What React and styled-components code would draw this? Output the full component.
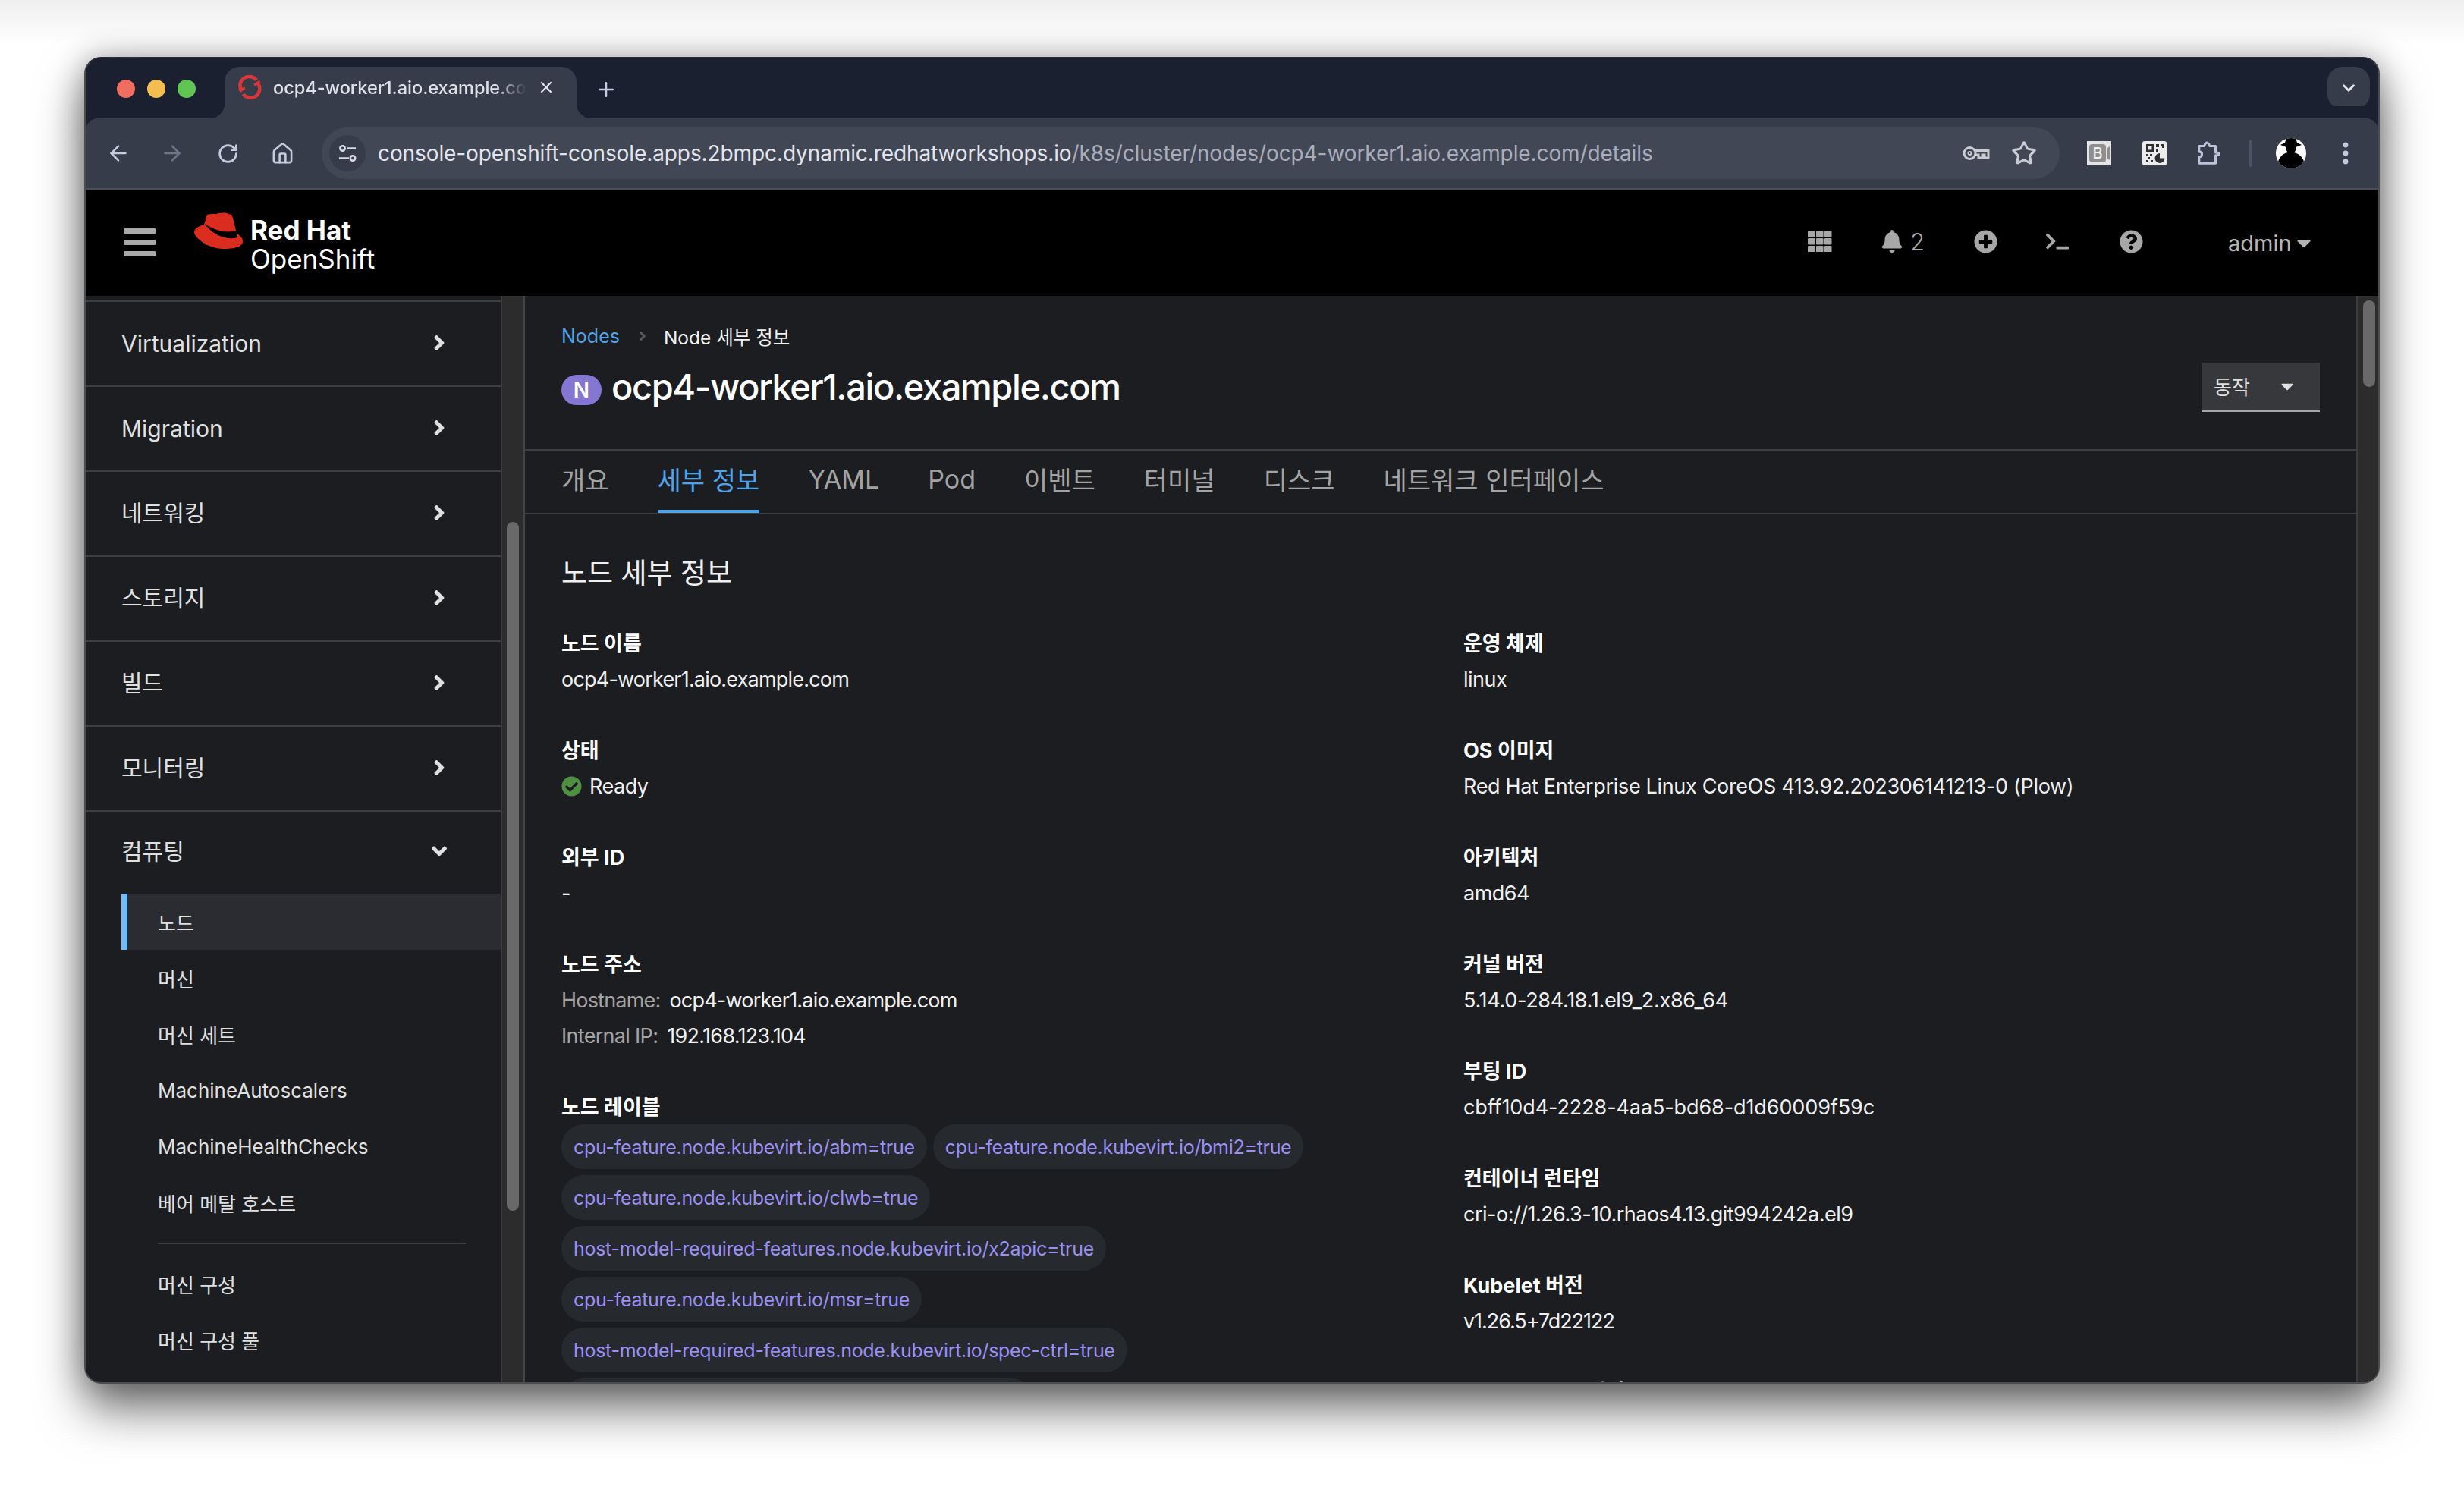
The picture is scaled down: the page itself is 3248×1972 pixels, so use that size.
import styled, { createGlobalStyle } from 'styled-components';
import { ArrowLeft, ArrowRight, House, RotateCw, Star, Plus, X, ChevronDown } from 'lucide-react';
import { FaAngleRight, FaAngleDown, FaBell, FaPlusCircle, FaQuestionCircle, FaTerminal, FaCaretDown, FaCheckCircle } from 'react-icons/fa';

const SANS = `Inter, "Noto Sans CJK KR", sans-serif`;

const GlobalStyle = createGlobalStyle`
  html, body { margin: 0; padding: 0; background: #fff; }
  body { font-family: ${SANS}; }
  * { box-sizing: border-box; }
`;

// Fenêtre du navigateur
const Page = styled.div`
  width: 3248px;
  height: 1972px;
  padding: 75px 111px 0;
  background: linear-gradient(#efefef 0, #fff 60px);
  overflow: hidden;
`;

const Window = styled.div`
  width: 3026px;
  height: 1749px;
  display: flex;
  flex-direction: column;
  border: 2px solid #4a4c50;
  border-top-color: #2b2e36;
  border-radius: 22px;
  overflow: hidden;
  background: #1b1d21;
  box-shadow: 0 34px 62px rgba(0, 0, 0, 0.55), 0 0 40px rgba(0, 0, 0, 0.3);
`;

const TabStrip = styled.div`
  height: 79px;
  flex: none;
  display: flex;
  align-items: flex-start;
  padding: 11px 11px 0 41px;
  background: #1a2030;
`;

const Lights = styled.div`
  display: flex;
  gap: 16px;
  margin-top: 17px;
`;

const Light = styled.span`
  width: 24px;
  height: 24px;
  border-radius: 50%;
  background: ${(p) => p.$color};
`;

const BrowserTab = styled.div`
  position: relative;
  width: 464px;
  height: 68px;
  margin-left: 38px;
  padding: 0 20px 14px 17px;
  display: flex;
  align-items: center;
  background: #373c4b;
  border-radius: 20px 20px 0 0;

  &::before, &::after {
    content: '';
    position: absolute;
    bottom: 0;
    width: 20px;
    height: 20px;
  }
  &::before {
    left: -20px;
    background: radial-gradient(circle at 0 0, #1a2030 20px, #373c4b 20.5px);
  }
  &::after {
    right: -20px;
    background: radial-gradient(circle at 100% 0, #1a2030 20px, #373c4b 20.5px);
  }
`;

const TabTitle = styled.span`
  width: 334px;
  margin-left: 15px;
  font-size: 23.5px;
  font-weight: 500;
  color: #dfe1e8;
  white-space: nowrap;
  overflow: hidden;
  mask-image: linear-gradient(to right, #000 88%, transparent 100%);
`;

const TabClose = styled.span`
  display: flex;
  margin-left: 14px;
  color: #e4e6ee;
`;

const NewTab = styled.span`
  display: flex;
  margin: 15px 0 0 24px;
  color: #c5cade;
`;

const TabMenu = styled.span`
  width: 56px;
  height: 56px;
  margin-left: auto;
  display: flex;
  align-items: center;
  justify-content: center;
  background: #373c4b;
  border-radius: 20px;
  color: #e4e6ee;
`;

const Toolbar = styled.div`
  height: 94px;
  flex: none;
  display: flex;
  align-items: center;
  padding: 0 0 0 27px;
  background: #373c4b;
  border-bottom: 2px solid #4c4f57;
  border-radius: 16px 16px 0 0;
  box-shadow: 0 -16px 0 #1a2030;
`;

const ToolButton = styled.span`
  width: 32px;
  height: 40px;
  flex: none;
  display: flex;
  align-items: center;
  justify-content: center;
  margin-left: ${(p) => p.$gap || 0}px;
  color: ${(p) => (p.$dim ? '#6f7588' : '#c5cade')};
`;

const Omnibox = styled.div`
  width: 2291px;
  height: 68px;
  flex: none;
  margin-left: 36px;
  padding: 0 30px 0 10px;
  display: flex;
  align-items: center;
  background: #424756;
  border-radius: 34px;
`;

const TuneBadge = styled.span`
  width: 48px;
  height: 48px;
  flex: none;
  display: flex;
  align-items: center;
  justify-content: center;
  border-radius: 50%;
  background: #373c4b;
`;

const Url = styled.div`
  margin-left: 16px;
  font-size: 28px;
  letter-spacing: -0.1px;
  color: #e3e5ec;
  white-space: nowrap;

  span { color: #a9adba; }
`;

const OmniIcons = styled.div`
  margin-left: auto;
  display: flex;
  align-items: center;
  gap: 28px;
  color: #c9cbd3;
`;

const Separator = styled.span`
  width: 3px;
  height: 36px;
  margin-left: 37px;
  background: #4d5366;
  border-radius: 2px;
`;

const Avatar = styled.span`
  width: 40px;
  height: 40px;
  flex: none;
  margin-left: 32px;
  display: flex;
`;

// Barre noire de la console
const Masthead = styled.header`
  height: 140px;
  flex: none;
  display: flex;
  align-items: center;
  background: #000;
`;

const Burger = styled.div`
  width: 42px;
  margin: 0 0 2px 50px;
  display: flex;
  flex-direction: column;
  gap: 8px;

  span {
    height: 7px;
    border-radius: 1px;
    background: #a9a9a9;
  }
`;

const Logo = styled.div`
  margin-left: 51px;
  display: flex;
  align-items: flex-start;
`;

const LogoText = styled.div`
  margin: 4px 0 0 10px;
  color: #fff;

  b {
    display: block;
    font-size: 35px;
    line-height: 38px;
    font-weight: 700;
  }
  span {
    display: block;
    font-size: 35px;
    line-height: 38px;
    font-weight: 400;
  }
`;

const HeadTools = styled.div`
  margin-left: auto;
  padding-bottom: 4px;
  display: grid;
  grid-template-columns: 96px 130px 80px 110px 84px 284px;
  align-items: center;
  justify-items: center;
  color: #a7a7a7;
`;

const BellGroup = styled.span`
  margin-right: 8px;
  display: flex;
  align-items: center;
  gap: 9px;
  font-size: 31px;
  font-weight: 300;
`;

const AdminMenu = styled.span`
  justify-self: start;
  margin: 4px 0 0 86px;
  display: flex;
  align-items: center;
  gap: 1px;
  font-size: 29px;
  font-weight: 400;
  color: #b4b4b4;
`;

const Body = styled.div`
  flex: 1;
  min-height: 0;
  display: flex;
  overflow: hidden;
`;

// Menu latéral
const Sidebar = styled.nav`
  width: 547px;
  flex: none;
  padding-top: 6px;
  overflow: hidden;
`;

const NavGroup = styled.div`
  height: ${(p) => (p.$open ? 110 : 112)}px;
  padding: 0 65px ${(p) => (p.$open ? 2 : 0)}px 47px;
  display: flex;
  align-items: center;
  justify-content: space-between;
  border-top: 2px solid #3c3f42;
  font-size: 30px;
  color: #e0e0e0;

  svg { margin-bottom: 3px; }
`;

const NavLabel = styled.span`
  margin-bottom: ${(p) => (p.$korean ? 6 : 0)}px;
`;

const SubItem = styled.div`
  height: 74px;
  margin-left: 47px;
  padding-left: ${(p) => (p.$active ? 40 : 48)}px;
  display: flex;
  align-items: center;
  font-size: 26px;
  color: #e0e0e0;
  background: ${(p) => (p.$active ? '#2a2c31' : 'transparent')};
  border-left: ${(p) => (p.$active ? '8px solid #73bcf7' : 'none')};
`;

const SubDivider = styled.hr`
  height: 2px;
  margin: 16px 46px 15px 95px;
  border: 0;
  background: #3c3f42;
`;

const ScrollTrack = styled.div`
  width: ${(p) => p.$width}px;
  flex: none;
  padding-left: ${(p) => p.$inset}px;
  background: #2c2c2c;
  border-right: ${(p) => (p.$ruleRight ? '3px solid #454545' : 'none')};
  border-left: ${(p) => (p.$ruleLeft ? '2px solid #3c3c3c' : 'none')};
`;

const ScrollThumb = styled.div`
  width: 16px;
  height: ${(p) => p.$height}px;
  margin-top: ${(p) => p.$top}px;
  border-radius: 8px;
  background: #696969;
`;

const Main = styled.main`
  flex: 1;
  min-width: 0;
  overflow: hidden;
  background: #1b1d21;
`;

const PageHead = styled.div`
  height: 204px;
  padding: 36px 48px 0;
  border-bottom: 2px solid #3c3f42;
`;

const Crumbs = styled.div`
  height: 34px;
  display: flex;
  align-items: center;
  font-size: 24.5px;
  color: #f0f0f0;

  a { color: #4fa3ea; font-size: 25px; }
  svg { margin: 0 18px 0 20px; color: #55575b; }
`;

const TitleRow = styled.div`
  margin-top: 21px;
  display: flex;
  align-items: flex-start;
  justify-content: space-between;
`;

const Title = styled.h1`
  margin: 0;
  display: flex;
  align-items: center;
  height: 56px;
  font-size: 47px;
  font-weight: 500;
  letter-spacing: -1.4px;
  color: #fff;
`;

const NodeBadge = styled.span`
  width: 53px;
  height: 40px;
  margin: 10px 13px 0 0;
  display: flex;
  align-items: center;
  justify-content: center;
  border-radius: 20px;
  background: #8476d1;
  font-size: 28px;
  font-weight: 600;
  letter-spacing: 0;
`;

const ActionButton = styled.button`
  width: 156px;
  height: 65px;
  margin-top: -3px;
  padding: 0 30px 2px 16px;
  display: flex;
  align-items: center;
  justify-content: space-between;
  background: #36383c;
  border: 0;
  border-bottom: 2px solid #a5a5a5;
  font-family: inherit;
  font-size: 26px;
  color: #e0e0e0;
`;

const Tabs = styled.div`
  height: 84px;
  padding: 0 48px;
  display: flex;
  gap: 64px;
  border-bottom: 2px solid #3c3f42;
`;

const TabLink = styled.span`
  height: 82px;
  padding-bottom: 3px;
  display: flex;
  align-items: center;
  font-size: 34px;
  color: ${(p) => (p.$active ? '#4fa3ea' : '#a3a3a3')};
  border-bottom: 4px solid ${(p) => (p.$active ? '#4fa3ea' : 'transparent')};
`;

const Section = styled.section`
  padding: 53px 0 0 48px;
`;

const SectionTitle = styled.h2`
  margin: 0 0 44px;
  font-size: 37px;
  line-height: 50px;
  font-weight: 400;
  color: #f0f0f0;
`;

const Columns = styled.div`
  display: grid;
  grid-template-columns: 1189px 1fr;
`;

const Field = styled.div`
  padding-right: 48px;
  margin-bottom: 47px;
`;

const Label = styled.div`
  font-size: 27px;
  line-height: 47px;
  font-weight: 700;
  color: #fff;
`;

const Value = styled.div`
  display: flex;
  align-items: center;
  gap: 10px;
  font-size: 27px;
  line-height: 47px;
  letter-spacing: ${(p) => p.$track ?? -0.5}px;
  color: #f0f0f0;
  white-space: nowrap;

  em {
    margin-right: 2px;
    font-style: normal;
    color: #a3a3a3;
  }
`;

const ChipWrap = styled.div`
  margin-top: -1px;
  display: flex;
  flex-wrap: wrap;
  gap: 8px;
`;

const Chip = styled.span`
  height: 59px;
  padding: 0 16px;
  display: flex;
  align-items: center;
  border-radius: 30px;
  background: #26292d;
  font-size: 25px;
  letter-spacing: -0.3px;
  color: #9a8ff5;
  white-space: nowrap;
`;

const navGroups = ['Virtualization', 'Migration', '네트워킹', '스토리지', '빌드', '모니터링'];
const computeItems = ['노드', '머신', '머신 세트', 'MachineAutoscalers', 'MachineHealthChecks', '베어 메탈 호스트'];
const configItems = ['머신 구성', '머신 구성 풀'];
const pageTabs = ['개요', '세부 정보', 'YAML', 'Pod', '이벤트', '터미널', '디스크', '네트워크 인터페이스'];

const rightFields = [
  ['운영 체제', 'linux'],
  ['OS 이미지', 'Red Hat Enterprise Linux CoreOS 413.92.202306141213-0 (Plow)', -0.33],
  ['아키텍처', 'amd64'],
  ['커널 버전', '5.14.0-284.18.1.el9_2.x86_64', -0.3],
  ['부팅 ID', 'cbff10d4-2228-4aa5-bd68-d1d60009f59c', -0.1],
  ['컨테이너 런타임', 'cri-o://1.26.3-10.rhaos4.13.git994242a.el9'],
  ['Kubelet 버전', 'v1.26.5+7d22122', -1.05],
  ['Kube-Proxy 버전', 'v1.26.5+7d22122', -1.05],
];

const labels = [
  'cpu-feature.node.kubevirt.io/abm=true',
  'cpu-feature.node.kubevirt.io/bmi2=true',
  'cpu-feature.node.kubevirt.io/clwb=true',
  'host-model-required-features.node.kubevirt.io/x2apic=true',
  'cpu-feature.node.kubevirt.io/msr=true',
  'host-model-required-features.node.kubevirt.io/spec-ctrl=true',
  'cpu-model-migration.node.kubevirt.io/Penryn=true',
];

const OpenShiftFavicon = () => (
  <svg width="32" height="32" viewBox="0 0 32 32" fill="none" stroke="#d8373a" strokeWidth="4.5">
    <path d="M6 21.5A12 12 0 0 1 25 6.5" />
    <path d="M27 11A12 12 0 0 1 7.5 25" />
    <path d="M2 19.5l8-2M22 13l7.5-4.5" strokeWidth="3.5" />
  </svg>
);

const TuneIcon = () => (
  <svg width="26" height="26" viewBox="0 0 26 26" fill="none" stroke="#d9dbe4" strokeWidth="2.6">
    <circle cx="6.5" cy="6.5" r="3.2" />
    <path d="M13 6.5h11M2 19.5h13" />
    <circle cx="20" cy="19.5" r="3.2" />
  </svg>
);

const KeyIcon = () => (
  <svg width="36" height="22" viewBox="0 0 36 22" fill="none" stroke="currentColor" strokeWidth="3">
    <circle cx="9.5" cy="11" r="7.5" />
    <circle cx="9.5" cy="11" r="2" strokeWidth="2" />
    <path d="M17 7.5h17v9.5h-5v-4h-3v4h-5v-4h-4" />
  </svg>
);

const BookmarkExt = () => (
  <svg width="32" height="32" viewBox="0 0 32 32">
    <rect width="32" height="32" fill="#e4e4e4" />
    <rect x="3" y="4" width="22" height="24" rx="4" fill="#8e8e8e" />
    <path d="M27 9l3-2v18l-3-2z" fill="#8e8e8e" />
    <text x="14" y="23" textAnchor="middle" fontFamily="Inter" fontSize="20" fontWeight="500" fill="#f2f2f2">B</text>
  </svg>
);

const QrExt = () => (
  <svg width="32" height="32" viewBox="0 0 32 32">
    <rect width="32" height="32" rx="3" fill="#ececec" />
    <g fill="#2d2f33">
      <path d="M5 4h10v10H5zM7.500 6.500v5h5v-5z" fillRule="evenodd" />
      <path d="M18 4h4v4h-4zM24 4h4v5h-2v-3h-2zM18 10h3v4h-3z" />
      <path d="M5 17h3v3H5zM10 17h3v3h-3zM7 21h3v3H7zM5 25h3v3H5zM11 25h3v3h-3z" />
      <path d="M23 16a6.500 6.500 0 1 0 6.500 6.500H23z" />
    </g>
  </svg>
);

const PuzzleExt = () => (
  <svg width="34" height="36" viewBox="0 0 34 36" fill="none" stroke="#bcc2da" strokeWidth="3.2" strokeLinejoin="round">
    <path d="M3 8h7c1-2 2-5 4-5s3 3 4 5h8v9c2 0 5 0 5 2s-3 2-5 2v11H3v-9c3 0 4-1 4-3.500S6 16 3 16z" />
  </svg>
);

const SpyAvatar = () => (
  <svg width="40" height="40" viewBox="0 0 40 40">
    <clipPath id="avatar-clip"><circle cx="20" cy="20" r="20" /></clipPath>
    <g clipPath="url(#avatar-clip)">
      <rect width="40" height="40" fill="#fff" />
      <path d="M14 0h12l2 6 6 3-8 3c1 3 0 5-2 7 5 1 9 4 12 9l4 12H0l4-12c3-5 6-8 12-9-2-2-3-4-2-7L6 9l6-3z" fill="#000" />
    </g>
  </svg>
);

const MoreDots = () => (
  <svg width="8" height="30" viewBox="0 0 8 30" fill="#c5cade">
    <circle cx="4" cy="4" r="3.4" />
    <circle cx="4" cy="15" r="3.4" />
    <circle cx="4" cy="26" r="3.4" />
  </svg>
);

const RedHatMark = () => (
  <svg width="64" height="48" viewBox="0 0 64 48">
    <path
      d="M17 3C22 1 28 3 33 1C40-.5 47 1 50 5C52 10 54 20 56 28C60 30 64 33 64 38C64 46 52 48 38 48C18 48 0 33 0 26C0 21 6 18 13 16Z"
      fill="#db2c20"
    />
    <path d="M14 15C25 23 42 28 55 24L57 33C45 37 25 31 14 15Z" fill="#000" />
  </svg>
);

const AppGrid = () => (
  <svg width="32" height="28" viewBox="0 0 32 28" fill="currentColor">
    {[0, 11, 22].map((x) =>
      [0, 10, 20].map((y) => <rect key={`${x}-${y}`} x={x} y={y} width="9.500" height="8.500" rx="1" />)
    )}
  </svg>
);

const App = () => (
  <Page>
    <GlobalStyle />
    <Window>
      <TabStrip>
        <Lights>
          <Light $color="#f16d60" />
          <Light $color="#f5bd4f" />
          <Light $color="#61c554" />
        </Lights>
        <BrowserTab>
          <OpenShiftFavicon />
          <TabTitle>ocp4-worker1.aio.example.com</TabTitle>
          <TabClose><X size={24} strokeWidth={2.2} /></TabClose>
        </BrowserTab>
        <NewTab><Plus size={30} strokeWidth={2} /></NewTab>
        <TabMenu><ChevronDown size={26} strokeWidth={2.6} /></TabMenu>
      </TabStrip>

      <Toolbar>
        <ToolButton><ArrowLeft size={32} strokeWidth={2} /></ToolButton>
        <ToolButton $gap={39} $dim><ArrowRight size={32} strokeWidth={2} /></ToolButton>
        <ToolButton $gap={41}><RotateCw size={29} strokeWidth={2.2} /></ToolButton>
        <ToolButton $gap={40}><House size={31} strokeWidth={2} /></ToolButton>
        <Omnibox>
          <TuneBadge><TuneIcon /></TuneBadge>
          <Url>
            console-openshift-console.apps.2bmpc.dynamic.redhatworkshops.io
            <span>/k8s/cluster/nodes/ocp4-worker1.aio.example.com/details</span>
          </Url>
          <OmniIcons>
            <KeyIcon />
            <Star size={34} strokeWidth={2.2} />
          </OmniIcons>
        </Omnibox>
        <ToolButton $gap={36}><BookmarkExt /></ToolButton>
        <ToolButton $gap={41}><QrExt /></ToolButton>
        <ToolButton $gap={40}><PuzzleExt /></ToolButton>
        <Separator />
        <Avatar><SpyAvatar /></Avatar>
        <ToolButton $gap={36}><MoreDots /></ToolButton>
      </Toolbar>

      <Masthead>
        <Burger><span /><span /><span /></Burger>
        <Logo>
          <RedHatMark />
          <LogoText>
            <b>Red Hat</b>
            <span>OpenShift</span>
          </LogoText>
        </Logo>
        <HeadTools>
          <AppGrid />
          <BellGroup><FaBell size={30} />2</BellGroup>
          <FaPlusCircle size={31} />
          <FaTerminal size={30} />
          <FaQuestionCircle size={31} />
          <AdminMenu>admin<FaCaretDown size={30} /></AdminMenu>
        </HeadTools>
      </Masthead>

      <Body>
        <Sidebar>
          {navGroups.map((name, index) => (
            <NavGroup key={name}>
              <NavLabel $korean={index > 1}>{name}</NavLabel>
              <FaAngleRight size={32} />
            </NavGroup>
          ))}
          <NavGroup $open>
            <NavLabel $korean>컴퓨팅</NavLabel>
            <FaAngleDown size={32} />
          </NavGroup>
          {computeItems.map((name, index) => (
            <SubItem key={name} $active={index === 0}>{name}</SubItem>
          ))}
          <SubDivider />
          {configItems.map((name) => (
            <SubItem key={name}>{name}</SubItem>
          ))}
        </Sidebar>
        <ScrollTrack $width={32} $inset={6} $ruleLeft $ruleRight>
          <ScrollThumb $top={298} $height={908} />
        </ScrollTrack>

        <Main>
          <PageHead>
            <Crumbs>
              <a>Nodes</a>
              <FaAngleRight size={20} />
              Node 세부 정보
            </Crumbs>
            <TitleRow>
              <Title><NodeBadge>N</NodeBadge>ocp4-worker1.aio.example.com</Title>
              <ActionButton>동작<FaCaretDown size={26} /></ActionButton>
            </TitleRow>
          </PageHead>

          <Tabs>
            {pageTabs.map((name) => (
              <TabLink key={name} $active={name === '세부 정보'}>{name}</TabLink>
            ))}
          </Tabs>

          <Section>
            <SectionTitle>노드 세부 정보</SectionTitle>
            <Columns>
              <div>
                <Field>
                  <Label>노드 이름</Label>
                  <Value $track={-0.8}>ocp4-worker1.aio.example.com</Value>
                </Field>
                <Field>
                  <Label>상태</Label>
                  <Value><FaCheckCircle size={27} color="#4f8f42" />Ready</Value>
                </Field>
                <Field>
                  <Label>외부 ID</Label>
                  <Value>-</Value>
                </Field>
                <Field>
                  <Label>노드 주소</Label>
                  <Value $track={-0.8}><em>Hostname:</em>ocp4-worker1.aio.example.com</Value>
                  <Value $track={-0.7}><em>Internal IP:</em>192.168.123.104</Value>
                </Field>
                <Field>
                  <Label>노드 레이블</Label>
                  <ChipWrap>
                    {labels.map((label) => <Chip key={label}>{label}</Chip>)}
                  </ChipWrap>
                </Field>
              </div>
              <div>
                {rightFields.map(([label, value, track]) => (
                  <Field key={label}>
                    <Label>{label}</Label>
                    <Value $track={track}>{value}</Value>
                  </Field>
                ))}
              </div>
            </Columns>
          </Section>
        </Main>
        <ScrollTrack $width={29} $inset={7} $ruleLeft>
          <ScrollThumb $top={6} $height={114} />
        </ScrollTrack>
      </Body>
    </Window>
  </Page>
);

export default App;
